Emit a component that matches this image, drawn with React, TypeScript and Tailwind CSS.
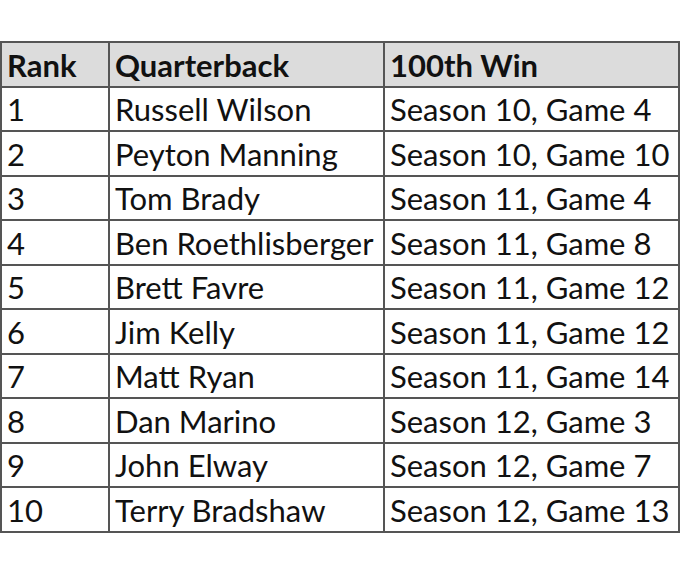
const rows: [string, string, string][] = [
  ["1", "Russell Wilson", "Season 10, Game 4"],
  ["2", "Peyton Manning", "Season 10, Game 10"],
  ["3", "Tom Brady", "Season 11, Game 4"],
  ["4", "Ben Roethlisberger", "Season 11, Game 8"],
  ["5", "Brett Favre", "Season 11, Game 12"],
  ["6", "Jim Kelly", "Season 11, Game 12"],
  ["7", "Matt Ryan", "Season 11, Game 14"],
  ["8", "Dan Marino", "Season 12, Game 3"],
  ["9", "John Elway", "Season 12, Game 7"],
  ["10", "Terry Bradshaw", "Season 12, Game 13"],
];

const cell = "h-[44.5px] border-2 border-[#555] px-[5px] pt-[2px] align-middle whitespace-nowrap";

export default function App() {
  return (
    <div className="h-[562px] w-[680px] bg-white pt-[41px] text-[#111]" style={{ fontFamily: "Lato, 'Liberation Sans', sans-serif" }}>
      <table className="w-[680px] table-fixed border-collapse text-[31px] leading-none">
        <colgroup>
          <col className="w-[108px]" />
          <col className="w-[275px]" />
          <col />
        </colgroup>
        <thead>
          <tr className="bg-[#dcdcdc] font-bold">
            <td className={cell}>Rank</td>
            <td className={cell}>Quarterback</td>
            <td className={cell}>100th Win</td>
          </tr>
        </thead>
        <tbody>
          {rows.map((r) => (
            <tr key={r[0]}>
              <td className={cell}>{r[0]}</td>
              <td className={cell}>{r[1]}</td>
              <td className={cell}>{r[2]}</td>
            </tr>
          ))}
        </tbody>
      </table>
    </div>
  );
}
